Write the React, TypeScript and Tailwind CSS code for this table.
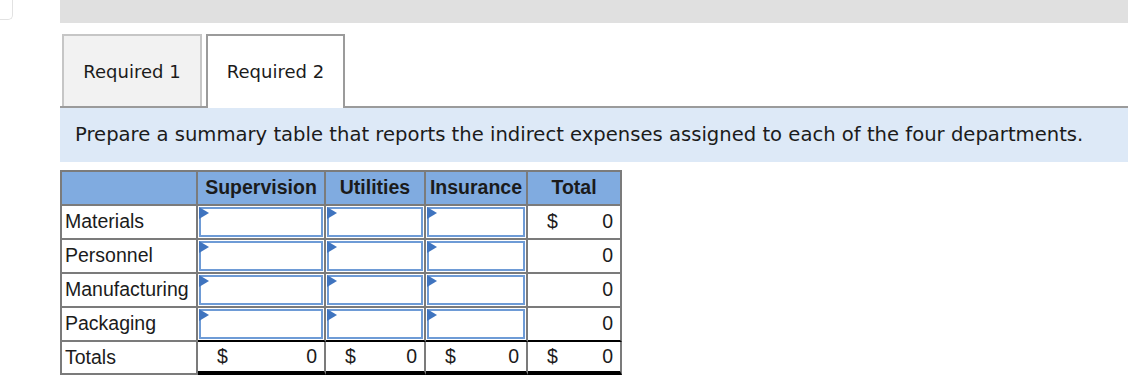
import React from 'react';

const DEPTS = ['Materials', 'Personnel', 'Manufacturing', 'Packaging'];
const COSTS = ['Supervision', 'Utilities', 'Insurance'];

// outer widths incl. the 2px right border of each column
const COL_W = ['w-[136px]', 'w-[128px]', 'w-[100px]', 'w-[102px]', 'w-[94px]'];

const grid = 'border-[#7b7b7b]';
const verdana = { fontFamily: '"DejaVu Sans", Verdana, sans-serif' };

// editable cell with the little blue flag in the corner
const InputCell: React.FC<{ width: string; lastRow?: boolean }> = ({ width, lastRow }) => (
  <div className={`${width} h-full border-r-2 border-b-2 ${grid} ${lastRow ? 'border-b-black' : ''} p-px`}>
    <div className="relative h-full w-full border-2 border-[#6e9bd6] bg-white">
      <svg className="absolute -left-[2px] -top-[2px]" width="10" height="12" viewBox="0 0 10 12">
        <polygon points="0,0 10,6 0,12" fill="#3f74bf" />
      </svg>
    </div>
  </div>
);

const MoneyCell: React.FC<{ width: string; dollar?: boolean; totals?: boolean }> = ({ width, dollar, totals }) => (
  <div
    className={`${width} h-full flex items-center justify-between pl-[19px] pr-[7px] border-r-2 ${grid} ${
      totals ? 'border-b-4 border-b-black' : 'border-b-2'
    }`}
  >
    <span>{dollar ? '$' : ''}</span>
    <span>0</span>
  </div>
);

export default function App() {
  return (
    <div className="w-[1128px] h-[392px] bg-white text-[#1b1b1b] overflow-hidden">
      {/* top strip */}
      <div className="flex h-[23px]">
        <div className="w-[13px] h-[20px] border-r border-b border-[#e2e2e2] rounded-br-[5px]" />
        <div className="ml-[47px] flex-1 bg-[#e0e0e0]" />
      </div>

      <div className="pl-[60px]">
        {/* tabs */}
        <div
          className="mt-[11px] flex items-end gap-[4px] pl-[2px] border-b-2 border-[#9b9b9b] text-[18px]"
          style={verdana}
        >
          <div className="w-[140px] h-[72px] flex items-center justify-center border-2 border-b-0 border-[#c6c6c6] bg-[#f2f2f2]">
            Required 1
          </div>
          <div className="relative -mb-[2px] w-[139px] h-[74px] pb-[2px] flex items-center justify-center border-2 border-b-0 border-[#9b9b9b] bg-white">
            Required 2
          </div>
        </div>

        {/* instructions */}
        <div className="h-[54px] flex items-center px-[15px] bg-[#dde9f7] text-[19.6px]" style={verdana}>
          Prepare a summary table that reports the indirect expenses assigned to each of the four departments.
        </div>

        {/* summary table */}
        <div
          className={`mt-[8px] w-[562px] border-t-2 border-l-2 ${grid} text-[19.5px]`}
          style={{ fontFamily: '"Liberation Sans", Arial, sans-serif' }}
        >
          <div className="flex h-[34px] bg-[#80abe0] font-bold">
            <div className={`${COL_W[0]} border-r-2 border-b-2 ${grid}`} />
            {[...COSTS, 'Total'].map((c, i) => (
              <div
                key={c}
                className={`${COL_W[i + 1]} flex items-center justify-center border-r-2 border-b-2 ${grid}`}
              >
                {c}
              </div>
            ))}
          </div>

          {DEPTS.map((d, r) => (
            <div key={d} className="flex h-[34px]">
              <div className={`${COL_W[0]} flex items-center pl-[3px] border-r-2 border-b-2 ${grid}`}>{d}</div>
              {COSTS.map((c, i) => (
                <InputCell key={c} width={COL_W[i + 1]} lastRow={r === DEPTS.length - 1} />
              ))}
              <div
                className={`${COL_W[4]} flex items-center justify-between pl-[19px] pr-[7px] border-r-2 border-b-2 ${grid} ${
                  r === DEPTS.length - 1 ? 'border-b-black' : ''
                }`}
              >
                <span>{r === 0 ? '$' : ''}</span>
                <span>0</span>
              </div>
            </div>
          ))}

          <div className="flex h-[33px]">
            <div className={`${COL_W[0]} flex items-center pl-[3px] border-r-2 border-b-2 ${grid}`}>Totals</div>
            {COL_W.slice(1).map((w, i) => (
              <MoneyCell key={i} width={w} dollar totals />
            ))}
          </div>
        </div>
      </div>
    </div>
  );
}
